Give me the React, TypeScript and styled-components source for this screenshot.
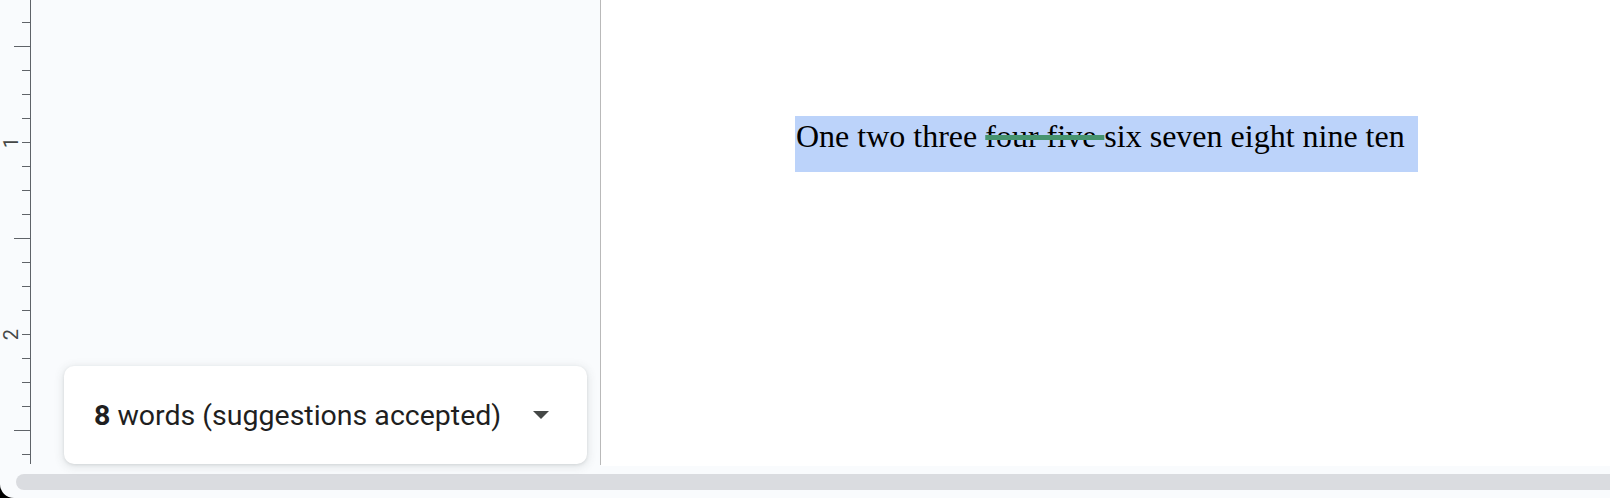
import React from 'react';
import styled, { createGlobalStyle } from 'styled-components';

const GlobalStyle = createGlobalStyle`
  html, body {
    margin: 0;
    padding: 0;
    background: #000;
  }
  #root {
    width: 1610px;
    height: 498px;
  }
`;

const Window = styled.div`
  width: 1610px;
  height: 498px;
  display: flex;
  flex-direction: column;
  background: #f9fbfd;
  border-bottom-left-radius: 14px;
  overflow: hidden;
`;

const Main = styled.div`
  height: 466px;
  display: flex;
`;

const SidePanel = styled.div`
  position: relative;
  width: 600px;
  height: 465px;
  background: #f9fbfd;
  border-right: 1px solid #b9b9b9;
  flex-shrink: 0;
`;

const Ruler = styled.svg`
  display: block;
`;

const RulerLabel = styled.text`
  font-family: Roboto, 'Liberation Sans', sans-serif;
  font-size: 20px;
  fill: #444746;
`;

const WordCount = styled.div`
  position: absolute;
  left: 64px;
  top: 366px;
  width: 523px;
  height: 98px;
  box-sizing: border-box;
  padding: 0 38px 0 30px;
  background: #fff;
  border-radius: 10px;
  box-shadow: 0 1px 3px rgba(60, 64, 67, 0.12), 0 2px 8px 2px rgba(60, 64, 67, 0.1);
  display: flex;
  align-items: center;
  justify-content: space-between;
`;

const CountText = styled.div`
  font-family: Roboto, 'Liberation Sans', sans-serif;
  font-size: 28.5px;
  color: #1f1f1f;
  white-space: nowrap;

  b {
    font-weight: 700;
  }
`;

const Caret = styled.span`
  width: 0;
  height: 0;
  border-left: 8px solid transparent;
  border-right: 8px solid transparent;
  border-top: 8px solid #444746;
`;

const Doc = styled.div`
  flex: 1;
  background: #fff;
  padding: 116px 0 0 194px;
`;

const Selection = styled.p`
  margin: 0;
  width: 623px;
  height: 56px;
  box-sizing: border-box;
  padding: 2px 0 0 1px;
  background: #bcd3fa;
  font-family: 'Liberation Serif', 'Times New Roman', serif;
  font-size: 32px;
  line-height: 37px;
  color: #000;
  white-space: nowrap;
`;

const Suggested = styled.span`
  text-decoration: line-through;
  text-decoration-color: #46946f;
  text-decoration-thickness: 5px;
`;

const BottomBar = styled.div`
  flex: 1;
  padding: 8px 0 0 16px;
`;

const Scrollbar = styled.div`
  height: 16px;
  width: 1620px;
  background: #dadce0;
  border-radius: 8px;
`;

const ticks = Array.from({ length: 19 }, (_, i) => 22.5 + i * 24);

const VerticalRuler = () => (
  <Ruler width="40" height="465" viewBox="0 0 40 465">
    <line x1="30.5" y1="0" x2="30.5" y2="464" stroke="#5f6368" strokeWidth="1" />
    {ticks.map((y, i) => {
      const long = i % 8 === 1;
      return (
        <line
          key={y}
          x1={long ? 14 : 22}
          y1={y}
          x2="30.5"
          y2={y}
          stroke="#5f6368"
          strokeWidth="1"
        />
      );
    })}
    <RulerLabel x="0" y="0" transform="translate(18 142.5) rotate(-90)" textAnchor="middle">
      1
    </RulerLabel>
    <RulerLabel x="0" y="0" transform="translate(18 334.5) rotate(-90)" textAnchor="middle">
      2
    </RulerLabel>
  </Ruler>
);

const App = () => (
  <>
    <GlobalStyle />
    <Window>
      <Main>
        <SidePanel>
          <VerticalRuler />
          <WordCount>
            <CountText>
              <b>8</b> words (suggestions accepted)
            </CountText>
            <Caret />
          </WordCount>
        </SidePanel>
        <Doc>
          <Selection>
            One two three <Suggested>four five </Suggested>six seven eight nine ten
          </Selection>
        </Doc>
      </Main>
      <BottomBar>
        <Scrollbar />
      </BottomBar>
    </Window>
  </>
);

export default App;
